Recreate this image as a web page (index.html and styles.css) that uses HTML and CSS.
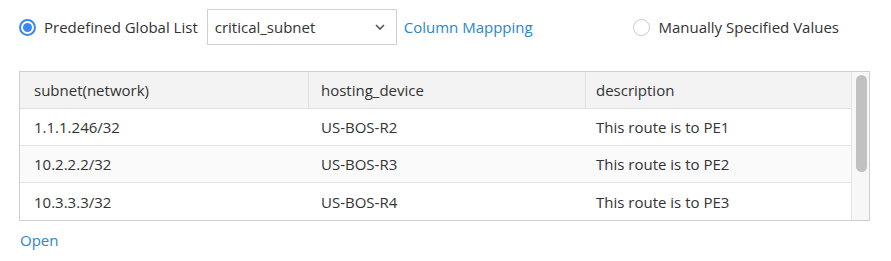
FILE: index.html
```html
<!DOCTYPE html>
<html lang="en">
<head>
  <meta charset="UTF-8">
  <title>Subnet Source</title>
  <link rel="stylesheet" href="styles.css">
</head>
<body>
  <div class="source-row">
    <label class="radio-option">
      <span class="radio checked"></span>
      Predefined Global List
    </label>
    <div class="select-box">
      <span>critical_subnet</span>
      <svg class="chevron" width="10" height="6" viewBox="0 0 10 6">
        <path d="M1 1 L5 5 L9 1" fill="none" stroke="#555" stroke-width="1.6"/>
      </svg>
    </div>
    <a class="link" href="#">Column Mappping</a>
    <label class="radio-option manual">
      <span class="radio"></span>
      Manually Specified Values
    </label>
  </div>

  <div class="grid">
    <div class="grid-body">
      <div class="grid-row header">
        <div class="cell c1">subnet(network)</div>
        <div class="cell c2">hosting_device</div>
        <div class="cell c3">description</div>
      </div>
      <div class="grid-row">
        <div class="cell c1">1.1.1.246/32</div>
        <div class="cell c2">US-BOS-R2</div>
        <div class="cell c3">This route is to PE1</div>
      </div>
      <div class="grid-row alt">
        <div class="cell c1">10.2.2.2/32</div>
        <div class="cell c2">US-BOS-R3</div>
        <div class="cell c3">This route is to PE2</div>
      </div>
      <div class="grid-row last">
        <div class="cell c1">10.3.3.3/32</div>
        <div class="cell c2">US-BOS-R4</div>
        <div class="cell c3">This route is to PE3</div>
      </div>
    </div>
    <div class="scroll-track">
      <div class="scroll-thumb"></div>
    </div>
  </div>

  <a class="link open" href="#">Open</a>
</body>
</html>
```

FILE: styles.css
```css
body {
  margin: 0;
  font-family: "Open Sans", Arial, sans-serif;
  font-size: 14px;
  color: #333;
  background: #fff;
}

.source-row {
  display: flex;
  align-items: center;
  height: 36px;
  padding: 9px 0 0 19px;
}

.radio-option {
  display: flex;
  align-items: center;
  gap: 8px;
  font-size: 15px;
}

.radio {
  width: 17px;
  height: 17px;
  border: 1px solid #c8c8c8;
  border-radius: 50%;
  box-sizing: border-box;
  position: relative;
}

.radio.checked {
  border: 2px solid #3b86f5;
}

.radio.checked::after {
  content: "";
  position: absolute;
  left: 2px;
  top: 2px;
  width: 9px;
  height: 9px;
  border-radius: 50%;
  background: #3b86f5;
}

.select-box {
  display: flex;
  align-items: center;
  justify-content: space-between;
  box-sizing: border-box;
  width: 190px;
  height: 36px;
  margin-left: 9px;
  padding: 0 11px 0 7px;
  border: 1px solid #d0d0d0;
  font-size: 15px;
}

.link {
  color: #2d86c6;
  text-decoration: none;
  font-size: 15px;
}

.source-row .link {
  margin-left: 7px;
}

.manual {
  margin-left: auto;
  margin-right: 52px;
}

.grid {
  display: flex;
  width: 851px;
  margin: 26px 0 0 19px;
  border: 1px solid #cfcfcf;
  box-sizing: border-box;
}

.grid-body {
  flex: 1;
}

.grid-row {
  display: flex;
  height: 37px;
  box-sizing: border-box;
  border-bottom: 1px solid #e6e6e6;
  font-size: 15px;
}

.grid-row.header {
  background: #f3f3f3;
  border-bottom-color: #e0e0e0;
}

.grid-row.alt {
  background: #fafafa;
}

.grid-row.last {
  border-bottom: none;
}

.cell {
  display: flex;
  align-items: center;
  box-sizing: border-box;
}

.c1 {
  width: 289px;
  padding-left: 14px;
}

.c2 {
  width: 277px;
  padding-left: 12px;
}

.c3 {
  flex: 1;
  padding-left: 10px;
}

.header .c1,
.header .c2 {
  border-right: 1px solid #e0e0e0;
}

.scroll-track {
  width: 18px;
  background: #f7f7f7;
  border-left: 1px solid #e4e4e4;
  padding: 3px 0 0 4px;
  box-sizing: border-box;
}

.scroll-thumb {
  width: 11px;
  height: 97px;
  border-radius: 6px;
  background: #c1c1c1;
}

.open {
  display: block;
  margin: 9px 0 0 20px;
}
```
